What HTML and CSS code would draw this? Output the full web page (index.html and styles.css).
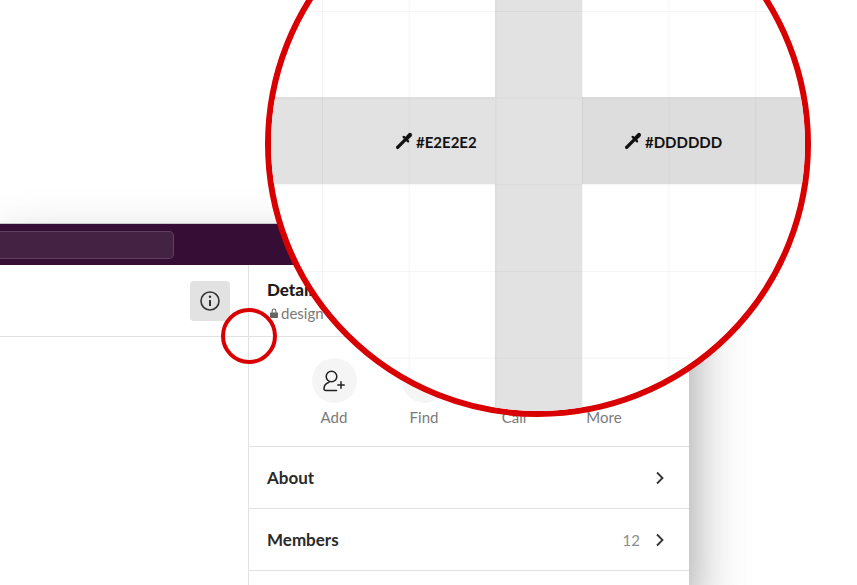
FILE: index.html
```html
<!DOCTYPE html>
<html lang="en">
<head>
  <meta charset="UTF-8">
  <title>Channel details</title>
  <link rel="stylesheet" href="styles.css">
</head>
<body>
  <div class="window">
    <div class="titlebar"><div class="search"></div></div>
    <div class="columns">
      <div class="channel">
        <div class="channelHead">
          <button class="infoBtn">
            <svg width="22" height="22" viewBox="0 0 22 22" fill="none" stroke="#333" stroke-width="1.6"><circle cx="11" cy="11" r="9"/><path d="M11 10v6" stroke-width="2"/><circle cx="11" cy="6.8" r="1.2" fill="#333" stroke="none"/></svg>
          </button>
        </div>
      </div>
      <div class="details">
        <div class="detailsHead">
          <div class="detailsTitle">Details</div>
          <div class="detailsSub">
            <svg width="8" height="10" viewBox="0 0 9 11" fill="#666"><path d="M1.8 5V3.2a2.7 2.7 0 0 1 5.4 0V5H8.2c.4 0 .8.4.8.8v4.2c0 .5-.4 1-.8 1H.8c-.4 0-.8-.5-.8-1V5.800c0-.4.4-.8.8-.8h1zm1.200 0h3V3.200a1.500 1.500 0 0 0-3 0V5z"/></svg>
            <span>design</span>
          </div>
        </div>
        <div class="actions">
          <div class="action">
            <span class="actionIcon">
              <svg width="24" height="24" viewBox="0 0 24 24" fill="none" stroke="#222" stroke-width="1.500" stroke-linecap="round"><circle cx="9.500" cy="7.500" r="5.300"/><path d="M7 13.200C3.500 14.500 2 17 2 19.500 2 21 3 21.500 4 21.500H14.500M19 12.800v6.400M15.800 16h6.400"/></svg>
            </span>
            <span class="actionLabel">Add</span>
          </div>
          <div class="action"><span class="actionIcon"></span><span class="actionLabel">Find</span></div>
          <div class="action"><span class="actionIcon"></span><span class="actionLabel">Call</span></div>
          <div class="action"><span class="actionIcon"></span><span class="actionLabel">More</span></div>
        </div>
        <div class="row"><span class="rowName">About</span><svg class="chevron" width="10" height="14" viewBox="0 0 10 14" fill="none" stroke="#333" stroke-width="1.800"><path d="M2 1.500 7.500 7 2 12.500"/></svg></div>
        <div class="row"><span class="rowName">Members</span><span class="rowCount">12</span><svg class="chevron" width="10" height="14" viewBox="0 0 10 14" fill="none" stroke="#333" stroke-width="1.800"><path d="M2 1.500 7.500 7 2 12.500"/></svg></div>
        <div class="row"></div>
      </div>
    </div>
  </div>

  <div class="smallLens"></div>

  <div class="lens">
    <div class="band colBand"></div>
    <div class="band leftBand">
      <svg class="dropper" width="18" height="18" viewBox="0 0 24 24" fill="none" stroke="#111" stroke-linecap="round"><path d="M3.500 20.500 13.500 10.500" stroke-width="4.400"/><path d="M11.500 6.500 17.500 12.500" stroke-width="3"/><path d="M15.500 8.500 20 4" stroke-width="5.500"/></svg>
      <span class="hex">#E2E2E2</span>
    </div>
    <div class="band midBand"></div>
    <div class="band rightBand">
      <svg class="dropper" width="18" height="18" viewBox="0 0 24 24" fill="none" stroke="#111" stroke-linecap="round"><path d="M3.500 20.500 13.500 10.500" stroke-width="4.400"/><path d="M11.500 6.500 17.500 12.500" stroke-width="3"/><path d="M15.500 8.500 20 4" stroke-width="5.500"/></svg>
      <span class="hex">#DDDDDD</span>
    </div>
    <div class="band colBand colBottom"></div>
  </div>
</body>
</html>
```

FILE: styles.css
```css
html, body { margin: 0; padding: 0; height: 585px; overflow: hidden; background: #fff; font-family: 'Lato', Arial, sans-serif; }
.window { width: 689px; height: 362px; margin-top: 223px; background: #fff; border-top: 1px solid #c9c5c9; box-shadow: 0 30px 52px rgba(0,0,0,0.42); }
.titlebar { height: 41px; background: #360d35; display: flex; align-items: center; }
.search { width: 173px; height: 26px; background: #432243; border: 1px solid #5f405f; border-left: none; border-radius: 0 5px 5px 0; }
.columns { display: flex; height: 320px; overflow: hidden; }
.channel { width: 248px; border-right: 1px solid #e2e2e2; }
.channelHead { height: 72px; box-sizing: border-box; border-bottom: 1px solid #e2e2e2; display: flex; align-items: center; justify-content: flex-end; padding-right: 18px; }
.infoBtn { width: 40px; height: 40px; padding: 0; border: none; border-radius: 4px; background: #e2e2e2; display: flex; align-items: center; justify-content: center; }
.details { flex: 1; }
.detailsHead { height: 72px; box-sizing: border-box; padding: 14px 18px 0; border-bottom: 1px solid #e2e2e2; }
.detailsTitle { font-size: 17px; font-weight: 900; color: #1d1c1d; line-height: 22px; }
.detailsSub { display: flex; align-items: center; gap: 3px; margin-top: 3px; padding-left: 3px; font-size: 15px; line-height: 18px; color: #7a7a7a; }
.actions { display: flex; height: 110px; box-sizing: border-box; padding: 21px 0 0 40px; border-bottom: 1px solid #e2e2e2; }
.action { width: 90px; display: flex; flex-direction: column; align-items: center; }
.actionIcon { width: 45px; height: 45px; border-radius: 50%; background: #f5f5f5; display: flex; align-items: center; justify-content: center; }
.actionLabel { margin-top: 5px; font-size: 15px; line-height: 18px; color: #7a7a7a; }
.row { height: 62px; box-sizing: border-box; padding: 0 24px 0 18px; border-bottom: 1px solid #e2e2e2; display: flex; align-items: center; }
.rowName { flex: 1; font-size: 17px; font-weight: 700; color: #2b2a2b; }
.rowCount { margin-right: 15px; font-size: 15px; color: #8e8e8e; }
.smallLens { position: absolute; left: 221px; top: 308px; width: 48px; height: 48px; border: 4px solid #d80000; border-radius: 50%; }
.lens { position: absolute; left: 265px; top: -129px; width: 534px; height: 534px; border: 6px solid #d80000; border-radius: 50%; overflow: hidden; background: #fff; display: grid; grid-template-columns: 224px 87px 1fr; grid-template-rows: 220px 87px 1fr; }
.lens::after { content: ''; position: absolute; inset: 0; background-image: linear-gradient(90deg, rgba(0,0,0,0.04) 1px, transparent 1px), linear-gradient(rgba(0,0,0,0.04) 1px, transparent 1px); background-size: 86.67px 86.67px; background-position: 51px 47.33px; }
.band { display: flex; align-items: center; }
.colBand { grid-column: 2; grid-row: 1; background: #e2e2e2; }
.colBottom { grid-row: 3; }
.leftBand { grid-column: 1; grid-row: 2; background: #e2e2e2; padding-left: 124px; }
.midBand { grid-column: 2; grid-row: 2; background: #e2e2e2; }
.rightBand { grid-column: 3; grid-row: 2; background: #dddddd; padding-left: 42px; }
.hex { margin-left: 3px; padding-top: 3px; font-size: 15px; font-weight: 700; color: #111; }
```
